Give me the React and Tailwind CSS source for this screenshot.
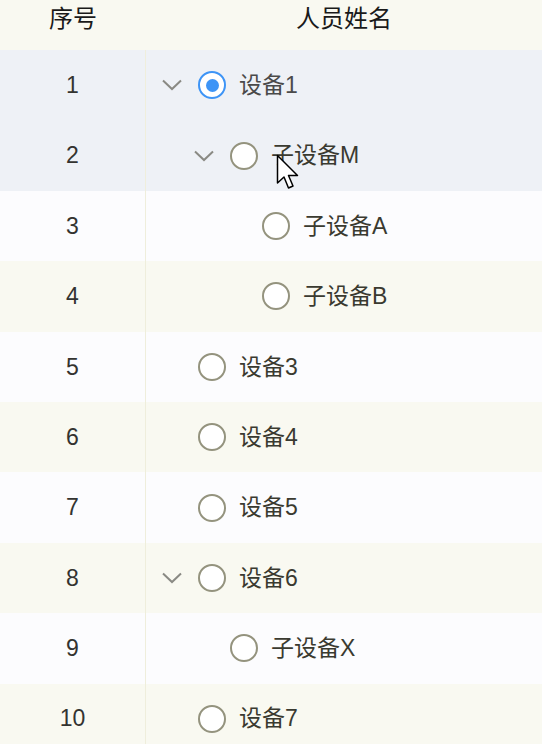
import React from 'react';

const rows = [
    { no: 1, name: '设备1', level: 0, expandable: true, checked: true, bg: 'bg-[#eef1f6]' },
    { no: 2, name: '子设备M', level: 1, expandable: true, bg: 'bg-[#eef1f6]' },
    { no: 3, name: '子设备A', level: 2, bg: 'bg-[#fcfcfe]' },
    { no: 4, name: '子设备B', level: 2, bg: 'bg-[#f9f9f1]' },
    { no: 5, name: '设备3', level: 0, bg: 'bg-[#fcfcfe]' },
    { no: 6, name: '设备4', level: 0, bg: 'bg-[#f9f9f1]' },
    { no: 7, name: '设备5', level: 0, bg: 'bg-[#fcfcfe]' },
    { no: 8, name: '设备6', level: 0, expandable: true, bg: 'bg-[#f9f9f1]' },
    { no: 9, name: '子设备X', level: 1, bg: 'bg-[#fcfcfe]' },
    { no: 10, name: '设备7', level: 0, bg: 'bg-[#f9f9f1]' },
];

const indents = ['w-0', 'w-[32px]', 'w-[64px]'];

const Chevron = () => (
    <svg width="24" height="14" viewBox="0 0 24 14" fill="none">
        <path d="M3 2.5 L12 11 L21 2.5" stroke="#8a8a84" strokeWidth="2" />
    </svg>
);

const Radio = ({ checked }) => (
    checked ? (
        <span className="w-[28px] h-[28px] rounded-full border-2 border-[#3d94f6] bg-white flex items-center justify-center shrink-0">
            <span className="w-[13px] h-[13px] rounded-full bg-[#3d94f6]" />
        </span>
    ) : (
        <span className="w-[28px] h-[28px] rounded-full border-2 border-[#94937e] bg-white shrink-0" />
    )
);

const Cursor = () => (
    <svg width="28" height="38" viewBox="0 0 28 38" className="absolute left-[276px] top-[154px]">
        <path d="M1.5 1.5 L1.5 29 L8 23 L12.5 34 L17 32 L12.5 21.5 L21.5 21.5 Z" fill="white" stroke="black" strokeWidth="1.5" strokeLinejoin="round" />
    </svg>
);

export default function App() {
    return (
        <div className="relative w-[542px] h-[744px] overflow-hidden bg-white text-[23px] font-['Liberation_Sans','Noto_Sans_CJK_SC',sans-serif]">
            <div className="flex h-[50px] bg-[#f9f9f1] text-[#1a1a1a] text-[24px]">
                <div className="w-[146px] text-center pt-[2px] leading-[33px]">序号</div>
                <div className="flex-1 text-center pt-[2px] leading-[33px]">人员姓名</div>
            </div>
            {rows.map((r) => (
                <div key={r.no} className={`flex h-[70.4px] ${r.bg}`}>
                    <div className="w-[146px] border-r border-[#efeedc] flex items-center justify-center text-[#333330]">
                        {r.no}
                    </div>
                    <div className="flex-1 flex items-center pl-[14px]">
                        <span className={`${indents[r.level]} shrink-0`} />
                        <span className="w-[38px] shrink-0 flex items-center">
                            {r.expandable && <Chevron />}
                        </span>
                        <Radio checked={r.checked} />
                        <span className={`ml-[13px] ${r.checked ? 'text-[#4a4a4a]' : 'text-[#3a3a30]'}`}>{r.name}</span>
                    </div>
                </div>
            ))}
            <Cursor />
        </div>
    );
}
